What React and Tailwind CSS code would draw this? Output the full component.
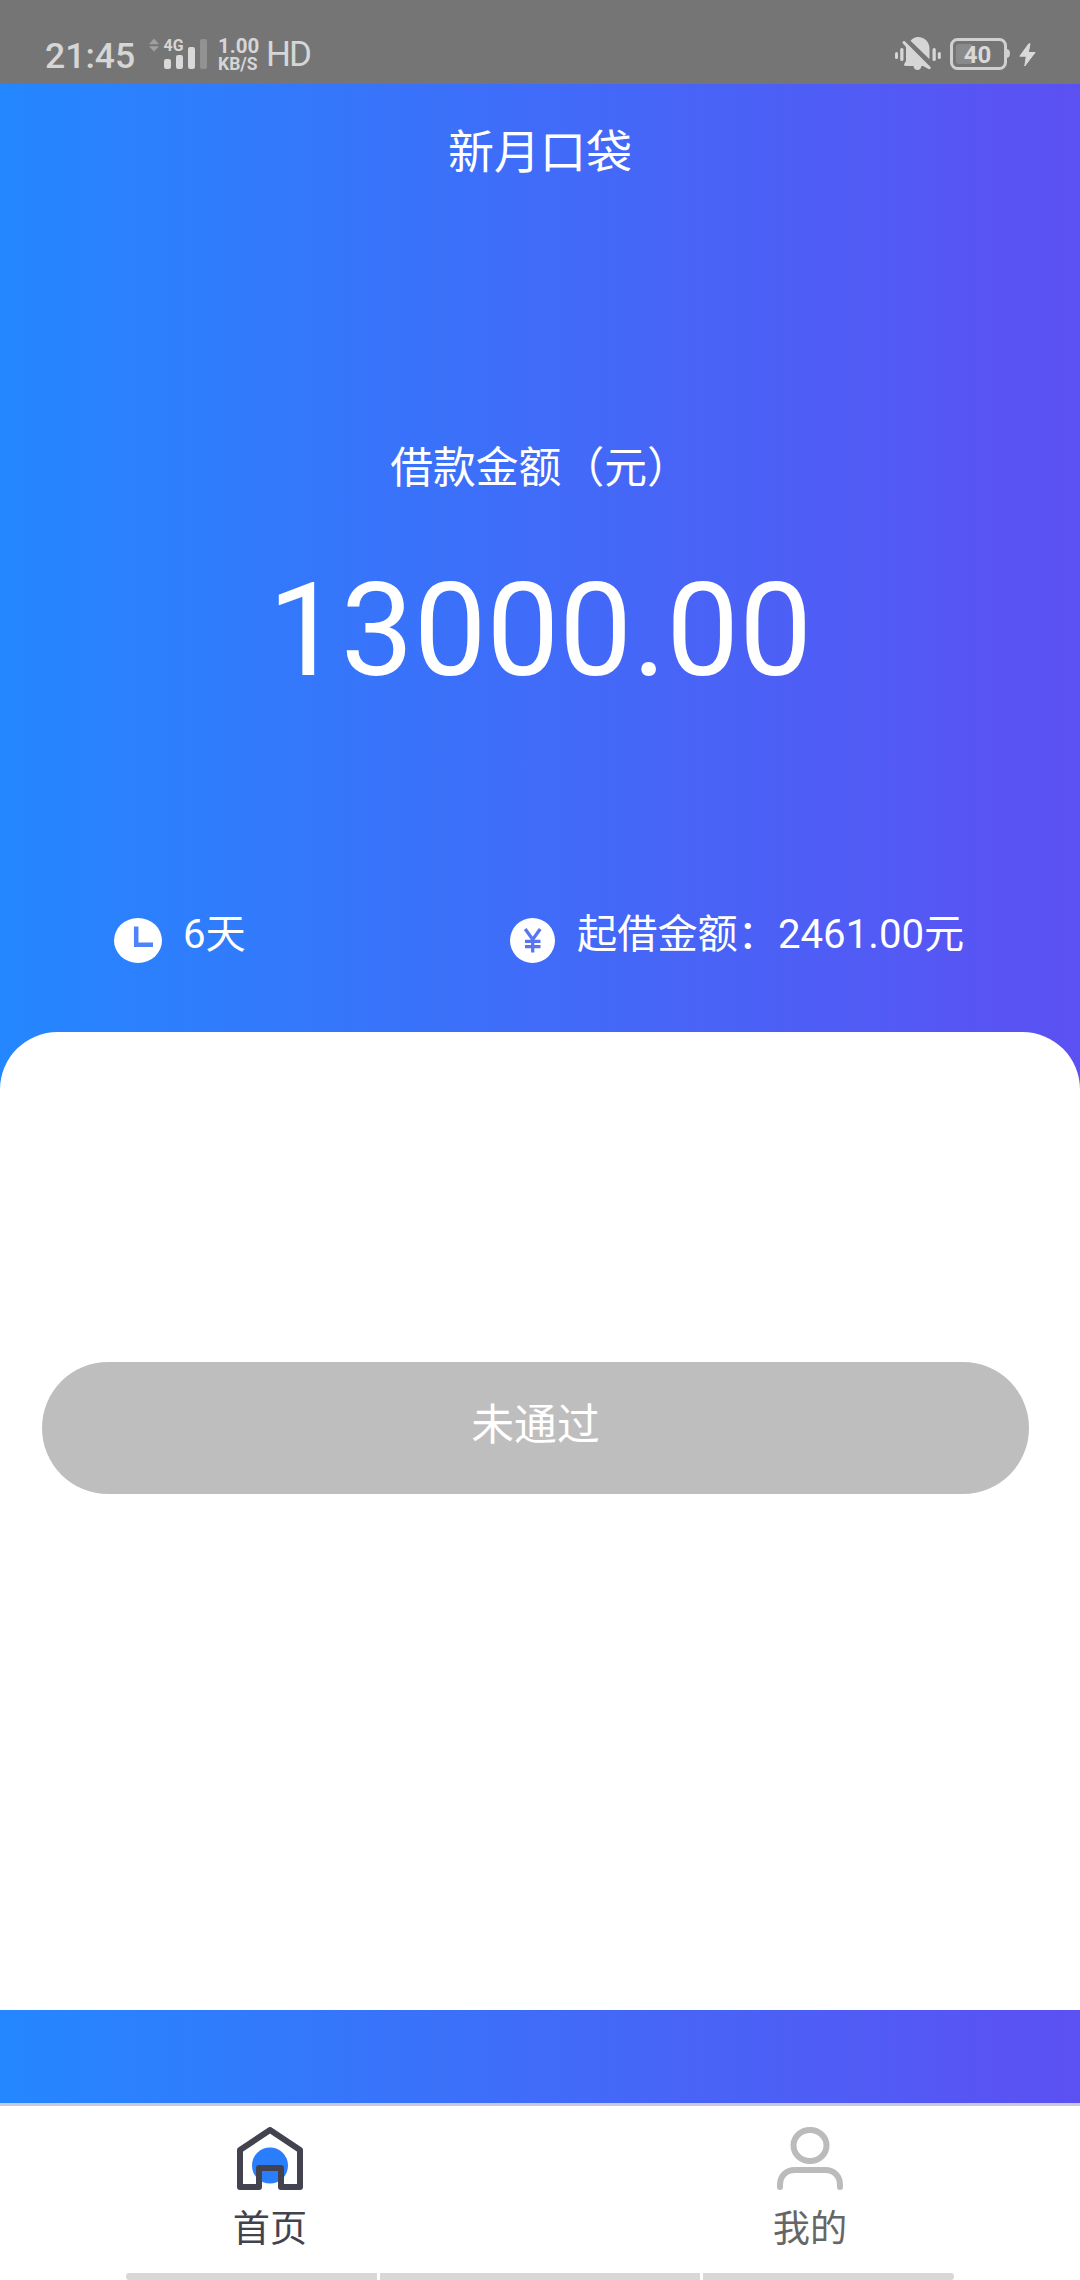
import React from 'react';

const SignalIcon = () => (
    <svg className="h-[36px] w-[62px] shrink-0" viewBox="0 0 62 36">
        <path d="M0 8.200 5 2.500l5 5.700zM0 10.200h10L5 15.400z" fill="#a0a0a0" />
        <text x="14.500" y="15" fontFamily="Roboto" fontSize="16.500" fontWeight="700" fill="#d6d6d6" textLength="20" lengthAdjust="spacingAndGlyphs">4G</text>
        <rect x="15" y="23" width="7" height="10" rx="2.200" fill="#d9d9d9" />
        <rect x="27" y="19" width="7" height="14" rx="2.200" fill="#d9d9d9" />
        <rect x="39" y="11" width="7" height="22" rx="2.200" fill="#d9d9d9" />
        <rect x="51" y="3" width="7" height="30" rx="2.200" fill="#929292" />
    </svg>
);

const MutedBellIcon = () => (
    <svg className="h-[36px] w-[47px] shrink-0" viewBox="0 0 47 36" fill="#d6d6d6">
        <rect x="0" y="16" width="3" height="7" rx="1.500" />
        <rect x="5.200" y="12" width="3.300" height="13" rx="1.600" />
        <rect x="37.500" y="12" width="3.300" height="13" rx="1.600" />
        <rect x="42.800" y="16" width="3" height="7" rx="1.500" />
        <path d="M15.500 4.700C18 2.200 20 1 22.700 1 30 1 34.500 6 34.500 13v10.300z" />
        <path d="M9.800 5.200 35.500 31c.8 1.400-.6 2.700-1.900 2L28 30h-1.500c-.5 2.500-1.800 4-4 4s-3.700-1.500-4-4h-8c-1.500 0-1.800-1.600-1-2.500l1.500-2.500V11L7.700 7.300C6.900 5.900 8.400 4.200 9.800 5.200z" />
    </svg>
);

const BatteryIcon = () => (
    <svg className="h-[36px] w-[60px] shrink-0" viewBox="0 0 60 36">
        <rect x="1.500" y="3.500" width="54" height="29" rx="6" fill="none" stroke="#d0d0d0" strokeWidth="3" />
        <path d="M57 13c2 .4 3 2 3 4.500S59 21.600 57 22z" fill="#d0d0d0" />
        <path d="M9 8h13v20H9a3 3 0 0 1-3-3V11a3 3 0 0 1 3-3z" fill="#8a8a8a" />
        <text x="27.500" y="26.700" textAnchor="middle" fontFamily="Roboto" fontSize="24" fontWeight="700" fill="#d9d9d9">40</text>
    </svg>
);

const BoltIcon = () => (
    <svg className="h-[24px] w-[17px] shrink-0" viewBox="0 0 17 24">
        <path d="M9.800.8.800 13.200h6.500L5.800 23 16 9.500H9.300L11 .8z" fill="#d9d9d9" stroke="#d9d9d9" strokeWidth="1" strokeLinejoin="round" />
    </svg>
);

const ClockIcon = () => (
    <svg className="h-[45px] w-[48px] shrink-0" viewBox="0 0 48 45">
        <ellipse cx="24" cy="22.500" rx="24" ry="22.500" fill="#fff" />
        <path d="M22.200 8.500V26.700h16.800" fill="none" stroke="#4f83f8" strokeWidth="4.500" />
    </svg>
);

const YuanIcon = () => (
    <svg className="h-[45px] w-[45px] shrink-0" viewBox="0 0 45 45">
        <circle cx="22.500" cy="22.500" r="22.500" fill="#fff" />
        <path d="M15.200 11 22.700 21.500 30.200 11M22.700 21v13.500M15 23.300h15.500M15 28.700h15.500" fill="none" stroke="#5a76ee" strokeWidth="3.300" />
    </svg>
);

const HomeIcon = () => (
    <svg className="h-[63px] w-[66px]" viewBox="0 0 66 63">
        <circle cx="33" cy="38.500" r="18" fill="#2b7efb" />
        <path d="M3 23 33 3l30 20v37H44V41H22v19H3z" fill="none" stroke="#43434f" strokeWidth="6" strokeLinejoin="round" />
    </svg>
);

const UserIcon = () => (
    <svg className="h-[63px] w-[66px]" viewBox="0 0 66 63" fill="none" stroke="#bbb" strokeWidth="6" strokeLinecap="round">
        <ellipse cx="33" cy="18.500" rx="16.500" ry="15.500" />
        <path d="M3 60v-2C3 49 9 43 18 43h30c9 0 15 6 15 15v2" />
    </svg>
);

const StatusBar = () => (
    <div className="flex h-[84px] shrink-0 items-start bg-[#757575] pl-[45px] pr-[44px] pt-[36px] text-[#d6d6d6]">
        <span className="w-[104px] whitespace-nowrap pt-px text-[35.600px] font-medium leading-[38px]">21:45</span>
        <SignalIcon />
        <div className="ml-[7px] flex w-[48px] flex-col whitespace-nowrap font-bold">
            <span className="text-[20.500px] leading-[20px]">1.00</span>
            <span className="text-[17.500px] leading-[17px]">KB/S</span>
        </div>
        <span className="text-[35px] leading-[37px] tracking-[-2px]">HD</span>
        <div className="ml-auto flex items-start">
            <MutedBellIcon />
            <div className="ml-[8px]">
                <BatteryIcon />
            </div>
            <div className="ml-[9px] pt-[7px]">
                <BoltIcon />
            </div>
        </div>
    </div>
);

const TabBar = () => (
    <nav className="flex h-[177px] shrink-0 flex-col border-t-[3px] border-[#c9c9db] bg-white">
        <div className="grid h-[167px] grid-cols-2 pt-[21px] text-[37.200px] leading-[54px]">
            <div className="flex flex-col items-center text-[#43434f]">
                <HomeIcon />
                <span className="mt-[12px]">首页</span>
            </div>
            <div className="flex flex-col items-center text-[#666]">
                <UserIcon />
                <span className="mt-[12px]">我的</span>
            </div>
        </div>
        <div className="flex h-[7px] gap-[3px] px-[126px]">
            <div className="w-[251px] rounded-l-[3px] bg-[#d8d8d8]" />
            <div className="w-[320px] bg-[#d8d8d8]" />
            <div className="w-[251px] rounded-r-[3px] bg-[#d8d8d8]" />
        </div>
    </nav>
);

export default function App() {
    return (
        <div className="flex h-[2280px] w-[1080px] flex-col overflow-hidden bg-linear-to-r/srgb from-[#2487ff] to-[#5c50f2] font-['Roboto','Noto_Sans_CJK_SC',sans-serif]">
            <StatusBar />

            <header className="flex h-[948px] shrink-0 flex-col text-white">
                <h1 className="mt-[35px] text-center text-[46px] leading-[66px]">新月口袋</h1>
                <p className="mt-[251px] text-center text-[42.800px] leading-[64px]">借款金额（元）</p>
                <p className="mt-[55px] text-center text-[129.600px] leading-[152px]">13000.00</p>
                <div className="mt-[196px] flex h-[60px] items-start text-[40.200px] leading-[60px]">
                    <div className="flex w-[396px] items-start">
                        <div className="ml-[114px] pt-[15px]">
                            <ClockIcon />
                        </div>
                        <span className="ml-[21px] pt-[2px]">6天</span>
                    </div>
                    <div className="ml-[114px] flex items-start">
                        <div className="pt-[15px]">
                            <YuanIcon />
                        </div>
                        <span className="ml-[22px] whitespace-nowrap pt-[2px]">起借金额：2461.00元</span>
                    </div>
                </div>
            </header>

            <main className="h-[978px] shrink-0 rounded-t-[57.600px] bg-white pl-[42px] pt-[330px]">
                <button className="flex h-[132px] w-[987px] items-start justify-center rounded-full bg-[#bebebe] pt-[31px] text-[42.800px] leading-[64px] text-white">
                    未通过
                </button>
            </main>

            <div className="h-[93px] shrink-0" />
            <TabBar />
        </div>
    );
}
